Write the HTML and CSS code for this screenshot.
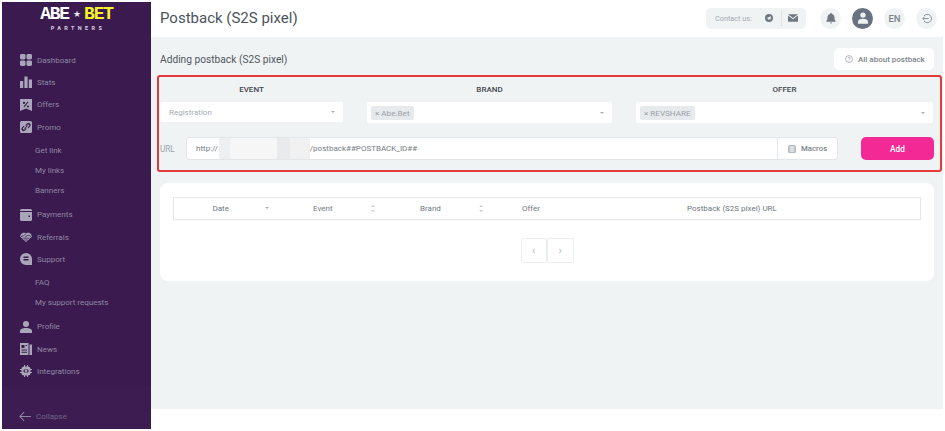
FILE: index.html
```html
<!DOCTYPE html>
<html lang="en">
<head>
<meta charset="utf-8">
<title>Postback (S2S pixel)</title>
<link rel="stylesheet" href="styles.css">
</head>
<body>
<div class="frame">
  <aside class="sidebar">
    <div class="logo">
      <div class="logo-main"><span>ABE</span><span class="logo-star">★</span><span class="logo-bet">BET</span></div>
      <div class="logo-sub">PARTNERS</div>
    </div>
    <nav class="nav">
      <a class="nav-item"><svg class="nav-icon" viewBox="0 0 12 12"><rect x="0" y="0" width="5.5" height="5.5" rx="1.4"/><rect x="6.5" y="0" width="5.5" height="5.5" rx="1.4"/><rect x="0" y="6.5" width="5.5" height="5.5" rx="1.4"/><rect x="6.5" y="6.5" width="5.5" height="5.5" rx="1.4"/></svg><span>Dashboard</span></a>
      <a class="nav-item"><svg class="nav-icon" viewBox="0 0 12 12"><rect x="0" y="5" width="3.2" height="7"/><rect x="4.4" y="0.5" width="3.2" height="11.5"/><rect x="8.8" y="3.5" width="3.2" height="8.5"/></svg><span>Stats</span></a>
      <a class="nav-item"><svg class="nav-icon" viewBox="0 0 12 12"><path fill-rule="evenodd" d="M0 0h12v12L6 9.6 0 12zM7.6 2.6l-4 5 .8.6 4-5zM4 2.8a1.1 1.1 0 1 0 0 2.2 1.1 1.1 0 0 0 0-2.2zm4 3.6a1.1 1.1 0 1 0 0 2.2 1.1 1.1 0 0 0 0-2.2z"/></svg><span>Offers</span></a>
      <a class="nav-item"><svg class="nav-icon" viewBox="0 0 12 12"><path fill-rule="evenodd" d="M1.5 0h9A1.5 1.5 0 0 1 12 1.5v9a1.5 1.5 0 0 1-1.5 1.5h-9A1.5 1.5 0 0 1 0 10.5v-9A1.5 1.5 0 0 1 1.500 0zM7 2.6 5.400 4.200l.8.8L7.600 3.600a1 1 0 0 1 1.400 1.400L7.600 6.400l.8.8L10 5.600A2 2 0 0 0 7 2.600zM5 9.400l1.600-1.600-.8-.8L4.400 8.400A1 1 0 0 1 3 7l1.400-1.400-.8-.8L2 6.400A2 2 0 0 0 5 9.400zM7.200 4.200 4.200 7.200l.6.6 3-3z"/></svg><span>Promo</span></a>
      <a class="nav-sub nav-sub-first">Get link</a>
      <a class="nav-sub">My links</a>
      <a class="nav-sub">Banners</a>
      <a class="nav-item nav-item-gap"><svg class="nav-icon" viewBox="0 0 12 12"><path fill-rule="evenodd" d="M1.500 0H10.500A1.500 1.500 0 0 1 12 1.500V2H0v-.5A1.500 1.500 0 0 1 1.500 0zM0 3h12v7.500a1.500 1.500 0 0 1-1.500 1.500h-9A1.500 1.500 0 0 1 0 10.500zM8.500 6.500v1.500H10V6.500z"/></svg><span>Payments</span></a>
      <a class="nav-item"><svg class="nav-icon" viewBox="0 0 12 12"><path d="M1.200 2.800 4 1.500 6 2.500 8 1.500 10.800 2.800 12 5.500 10 7.500 6 11 2 7.500 0 5.500z"/><path class="nav-icon-cut" d="M.8 5.600 3.600 4.600 5.400 3.400M11.200 5.600 8 4 5 6.200M2.600 7.200 9.400 7.200M4.400 9 7.600 9"/></svg><span>Referrals</span></a>
      <a class="nav-item"><svg class="nav-icon" viewBox="0 0 12 12"><path fill-rule="evenodd" d="M6 0a6 6 0 0 1 6 6v6H6A6 6 0 0 1 6 0zM3.500 3.500V5h5V3.500zm0 2.500v1.500h5V6z"/></svg><span>Support</span></a>
      <a class="nav-sub nav-sub-faq">FAQ</a>
      <a class="nav-sub">My support requests</a>
      <a class="nav-item nav-item-gap"><svg class="nav-icon" viewBox="0 0 12 12"><circle cx="6" cy="3" r="3"/><path d="M0 12V10c0-2 2.500-3 6-3s6 1 6 3v2z"/></svg><span>Profile</span></a>
      <a class="nav-item"><svg class="nav-icon" viewBox="0 0 12 12"><path fill-rule="evenodd" d="M0 0h8.500v12H0zM1.500 2v3h3V2zm0 4.500v1h5.500v-1zm0 2.300v1h5.500v-1zM5.500 2v1h1.500V2zM9.500 1.500H12V12H9.500z"/></svg><span>News</span></a>
      <a class="nav-item"><svg class="nav-icon" viewBox="0 0 12 12"><path fill-rule="evenodd" d="M4 0h1v1.500h2V0h1v1.500A2.500 2.500 0 0 1 10.500 4H12v1h-1.500v2H12v1h-1.500A2.500 2.500 0 0 1 8 10.500V12H7v-1.500H5V12H4v-1.500A2.500 2.500 0 0 1 1.500 8H0V7h1.500V5H0V4h1.500A2.500 2.500 0 0 1 4 1.500zM5 4 3 6l2 2 .7-.7L4.400 6 5.700 4.700zm2 0-.7.7L7.600 6 6.300 7.300 7 8l2-2z"/></svg><span>Integrations</span></a>
    </nav>
    <div class="collapse">
      <svg class="collapse-icon" viewBox="0 0 14 12"><path d="M6 1 1 6l5 5M1 6h13" fill="none" stroke-width="1.2"/></svg>
      <span>Collapse</span>
    </div>
  </aside>
  <div class="main">
    <header class="topbar">
      <h1 class="page-title">Postback (S2S pixel)</h1>
      <div class="contact">
        <span class="contact-label">Contact us:</span>
        <svg class="contact-icon" viewBox="0 0 10 10"><path fill-rule="evenodd" d="M5 0a5 5 0 1 1 0 10A5 5 0 0 1 5 0zM7.600 2.800 1.900 5l1.600.6.6 1.900 1-1.200 1.700 1.200z"/></svg>
        <span class="contact-sep"></span>
        <svg class="contact-icon contact-mail" viewBox="0 0 12 9"><path d="M0 0h12L6 4.500zM0 1.400v7.600h12V1.400L6 6z"/></svg>
      </div>
      <div class="round-btns">
        <span class="round"><svg class="round-icon" viewBox="0 0 10 12"><path d="M5 0a1 1 0 0 1 1 1c2 .4 2.800 2 2.800 3.600 0 2 .4 3.100 1.200 4V9.500H0v-.9c.8-.9 1.200-2 1.200-4C1.200 3 2 1.400 4 1a1 1 0 0 1 1-1zM3.800 10.300h2.400a1.200 1.200 0 0 1-2.400 0z"/></svg></span>
        <span class="round round-dark"><svg class="round-icon avatar-icon" viewBox="0 0 12 14"><circle cx="6" cy="3.500" r="3.200"/><path d="M0 14v-2.500C0 9.500 2.500 8 6 8s6 1.500 6 3.500V14z"/></svg></span>
        <span class="round round-text">EN</span>
        <span class="round"><svg class="round-icon logout-icon" viewBox="0 0 12 12"><path d="M2.400 3A5 5 0 1 1 2.400 9M8 6H1M3 4 1 6l2 2" fill="none" stroke-width="1"/></svg></span>
      </div>
    </header>
    <main class="content">
      <div class="section-head">
        <h2 class="section-title">Adding postback (S2S pixel)</h2>
        <a class="about-btn"><svg class="about-icon" viewBox="0 0 10 10"><circle cx="5" cy="5" r="4.300" fill="none" stroke-width=".8"/><path d="M3.700 4a1.300 1.300 0 1 1 1.900 1.200C5.100 5.500 5 5.700 5 6.300" fill="none" stroke-width=".8"/><circle cx="5" cy="7.500" r=".5" class="about-dot"/></svg>All about postback</a>
      </div>
      <section class="form-box">
        <div class="form-grid">
          <div class="form-head">EVENT</div>
          <div class="form-head">BRAND</div>
          <div class="form-head">OFFER</div>
          <div class="select select-single"><span>Registration</span><i class="caret"></i></div>
          <div class="select"><span class="tag">× Abe.Bet</span><i class="caret"></i></div>
          <div class="select"><span class="tag">× REVSHARE</span><i class="caret"></i></div>
        </div>
        <div class="url-row">
          <span class="url-label">URL</span>
          <div class="url-group">
            <div class="url-value">http://<span class="redacted"></span>/postback##POSTBACK_ID##</div>
            <a class="macros"><svg class="macros-icon" viewBox="0 0 10 10"><path fill-rule="evenodd" d="M2 0h6a2 2 0 0 1 2 2v6a2 2 0 0 1-2 2H2a2 2 0 0 1-2-2V2a2 2 0 0 1 2-2zm0 2v1h6V2zm0 2.500v1h6v-1zm0 2.500v1h6V7z"/></svg>Macros</a>
          </div>
          <button class="add-btn" type="button">Add</button>
        </div>
      </section>
      <section class="card">
        <div class="table-head">
          <div class="th th-date">Date<i class="caret sort-active"></i></div>
          <div class="th th-event">Event<i class="sort"></i></div>
          <div class="th th-brand">Brand<i class="sort"></i></div>
          <div class="th th-offer">Offer</div>
          <div class="th th-url">Postback (S2S pixel) URL</div>
        </div>
        <div class="pager">
          <span class="page-btn">‹</span>
          <span class="page-btn">›</span>
        </div>
      </section>
    </main>
  </div>
</div>
</body>
</html>
```
FILE: styles.css
```css
* { box-sizing: border-box; }
html, body { margin: 0; height: 100%; background: #fff; }
body { font-family: Roboto, "Liberation Sans", sans-serif; color: #6f7780; overflow: hidden; }
a { text-decoration: none; color: inherit; }

.frame { display: flex; width: 945px; height: 431px; padding: 2px; }

/* Sidebar */
.sidebar { width: 149px; flex: none; background: #3a1a4f; display: flex; flex-direction: column; }
.logo { height: 47px; padding-top: 4px; display: flex; flex-direction: column; align-items: center; }
.logo-main { display: flex; align-items: center; height: 17px; font: 700 18px/17px "Liberation Mono", monospace; letter-spacing: -1.2px; color: #fff; }
.logo-star { font: 9px/17px "DejaVu Sans", sans-serif; letter-spacing: 0; margin: 0 3px 0 4px; color: #e8e4ee; }
.logo-bet { color: #f6f229; }
.logo-sub { font: 700 5.5px/7px Roboto, sans-serif; letter-spacing: 3.4px; color: #d9d4e0; margin-top: 2px; margin-left: 3px; }
.nav { display: flex; flex-direction: column; padding-left: 18px; flex: 1; }
.nav-item { display: flex; align-items: center; height: 22.3px; font-size: 8px; color: #8f89a3; }
.nav-item-gap { margin-top: 3px; }
.nav-icon { width: 12px; height: 12px; flex: none; margin-right: 5px; fill: #a9a6ba; }
.nav-icon-cut { fill: none; stroke: #3a1a4f; stroke-width: .8; }
.nav-sub { display: flex; align-items: center; height: 20px; padding-left: 15px; font-size: 8px; color: #8f89a3; }
.nav-sub-first { margin-top: 2.5px; }
.nav-sub-faq { margin-top: 2px; }
.collapse { height: 42px; flex: none; background: #3c1c51; display: flex; align-items: center; padding: 16px 0 0 17px; font-size: 8px; color: #6f6585; }
.collapse-icon { width: 12px; height: 11px; margin-right: 5px; stroke: #8d87a0; }

/* Main */
.main { flex: 1; display: flex; flex-direction: column; min-width: 0; }
.topbar { height: 35px; flex: none; background: #fff; display: flex; align-items: center; padding: 0 6px 3px 9px; }
.page-title { margin: 0; font-size: 15px; font-weight: 400; color: #4b545c; flex: 1; }
.contact { display: flex; align-items: center; width: 100px; height: 21px; background: #eff3f4; border-radius: 5px; padding-left: 9px; }
.contact-label { font-size: 7.3px; color: #a3abb1; width: 50px; }
.contact-icon { width: 8px; height: 8px; fill: #6f7780; }
.contact-sep { width: 1px; height: 15px; background: #dfe3e6; margin: 0 6px 0 8px; }
.contact-mail { width: 10px; }
.round-btns { display: flex; margin-left: 14px; gap: 11px; }
.round { width: 21px; height: 21px; border-radius: 50%; background: #eff3f4; display: flex; align-items: center; justify-content: center; }
.round-dark { background: #687280; }
.round-text { font-size: 9.5px; font-weight: 500; color: #7b8389; }
.round-icon { width: 10px; height: 11px; fill: #6f7780; stroke: none; }
.avatar-icon { fill: #eff3f4; height: 12px; }
.logout-icon { fill: none; stroke: #7b8389; }

.content { height: 372px; flex: none; background: #eff3f4; padding: 11px 9px 0; display: flex; flex-direction: column; }
.section-head { display: flex; align-items: center; justify-content: space-between; height: 22px; }
.section-title { margin: 0; font-size: 10.2px; font-weight: 400; color: #4f585f; }
.about-btn { display: flex; align-items: center; height: 22px; width: 100px; background: #fff; border-radius: 5px; padding-left: 11px; font-size: 8px; font-weight: 500; color: #7b8389; }
.about-icon { width: 8px; height: 8px; margin-right: 5px; stroke: #8a9197; fill: none; }
.about-dot { fill: #8a9197; stroke: none; }

.form-box { margin: 5px -8px 0 -3px; height: 97px; border: 2px solid #e23b39; border-radius: 3px; padding: 0 6px 0 1px; }
.form-grid { display: grid; grid-template-columns: 183px 245px 297px; column-gap: 24px; align-items: center; }
.form-head { height: 25px; padding-top: 6px; text-align: center; font-size: 8px; line-height: 14px; font-weight: 500; color: #3f474e; }
.select { height: 21px; background: #fff; display: flex; align-items: center; padding-left: 4px; border-radius: 2px; }
.select-single { height: 20px; padding-left: 9px; font-size: 8px; color: #a5abb1; margin-bottom: 1px; }
.tag { height: 14px; padding: 0 4px; background: #e6eaec; border-radius: 2px; font-size: 8.1px; line-height: 14px; color: #9aa1a8; }
.caret { width: 0; height: 0; border-left: 2px solid transparent; border-right: 2px solid transparent; border-top: 2.5px solid #a8aeb3; margin-left: auto; margin-right: 8px; flex: none; }

.url-row { display: flex; align-items: center; margin-top: 14px; height: 23px; }
.url-label { width: 26px; flex: none; font-size: 8.2px; color: #a0a6ac; }
.url-group { display: flex; width: 652px; height: 23px; background: #fff; border: 1px solid #e3e6e8; border-radius: 3px; }
.url-value { flex: 1; padding-left: 9px; font-size: 8px; line-height: 21px; color: #747c84; display: flex; }
.redacted { width: 91px; height: 21px; margin-left: 1px; background: linear-gradient(90deg, #eeeff0 0 12%, #f6f6f7 12% 64%, #e9eaeb 64% 78%, #f1f1f2 78% 100%); }
.macros { width: 60px; flex: none; border-left: 1px solid #e3e6e8; display: flex; align-items: center; padding-left: 10px; font-size: 7.8px; font-weight: 500; color: #7b8389; }
.macros-icon { width: 8px; height: 8px; margin-right: 5px; fill: #b5babf; }
.add-btn { margin-left: 23px; width: 73px; height: 23px; border: 0; padding: 0; background: #f32a96; border-radius: 5px; color: #fff; font: 500 8.3px Roboto, sans-serif; }

.card { margin-top: 11px; height: 98px; background: #fff; border-radius: 8px; padding: 14px 13px 0; }
.table-head { display: flex; align-items: center; height: 23px; padding-bottom: 1px; border: 1px solid #e4e6e8; font-size: 8px; color: #6f7780; }
.th { display: flex; align-items: center; }
.th .sort-active { margin: 0 0 0 36px; }
.th-date { padding-left: 38.5px; width: 139px; flex: none; }
.th-event { width: 107px; flex: none; }
.th-brand { width: 102px; flex: none; }
.th-offer { width: 165px; flex: none; }
.th-url { flex: none; }
.sort { display: block; width: 4px; height: 7px; margin-left: 38px; position: relative; flex: none; }
.sort::before, .sort::after { content: ""; position: absolute; left: 0; border-left: 2px solid transparent; border-right: 2px solid transparent; }
.sort::before { top: 0; border-bottom: 2.5px solid #c9ced2; }
.sort::after { bottom: 0; border-top: 2.5px solid #c9ced2; }

.pager { display: flex; justify-content: center; margin-top: 18px; }
.page-btn { width: 26.5px; height: 25px; border: 1px solid #eceef0; background: #fff; display: flex; align-items: center; justify-content: center; font-size: 11px; color: #b3b8bd; border-radius: 2px; }
```
